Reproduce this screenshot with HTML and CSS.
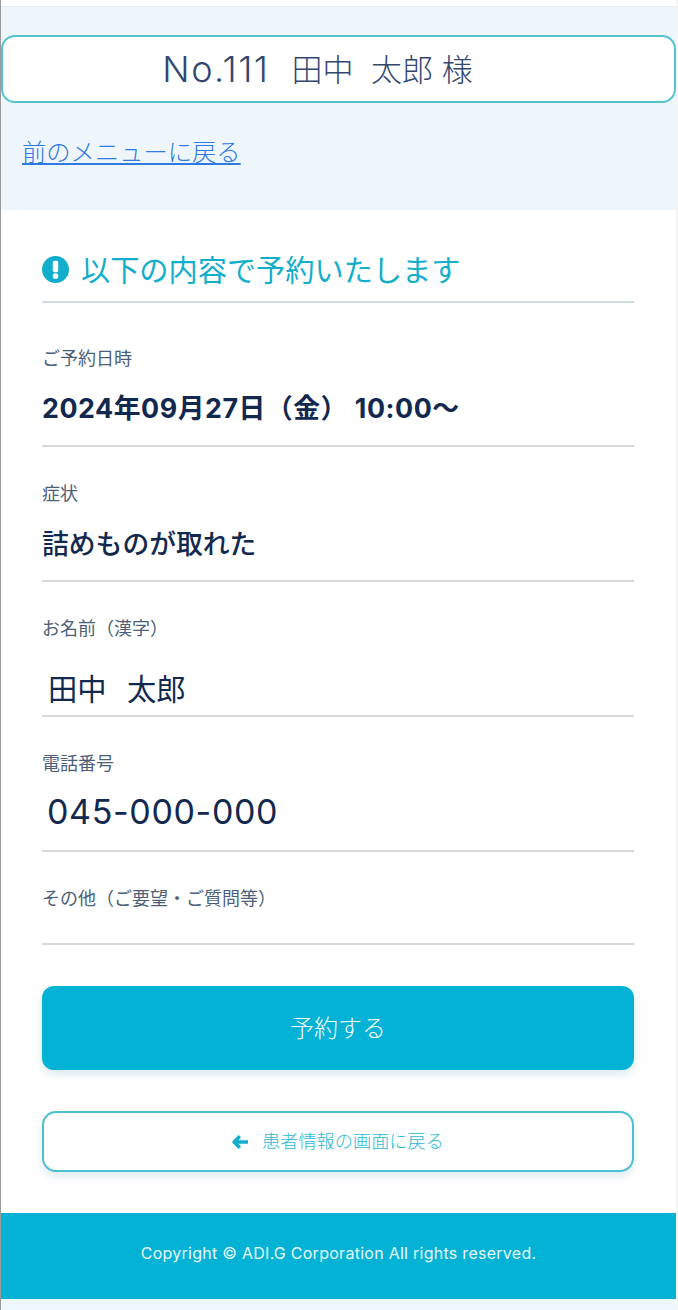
FILE: index.html
```html
<!DOCTYPE html>
<html lang="ja">
<head>
<meta charset="utf-8">
<title>予約確認</title>
<link rel="stylesheet" href="styles.css">
</head>
<body>
<div class="frame">
  <header class="top">
    <div class="patient"><span class="patient-no">No.111</span><span class="patient-name">田中&nbsp;&nbsp;太郎 様</span></div>
    <a class="menu-link" href="#">前のメニューに戻る</a>
  </header>
  <main class="main">
    <h1 class="title">
      <svg class="title-icon" viewBox="0 0 20 20" aria-hidden="true"><circle cx="10" cy="10" r="10" fill="#12aecb"/><rect x="8" y="3.6" width="4" height="8.4" rx="1.2" fill="#fff"/><circle cx="10" cy="14.8" r="2.1" fill="#fff"/></svg>
      <span>以下の内容で予約いたします</span>
    </h1>
    <section class="field field-date">
      <div class="label">ご予約日時</div>
      <div class="value value-date">2024年09月27日（金） 10:00～</div>
    </section>
    <section class="field field-symptom">
      <div class="label">症状</div>
      <div class="value">詰めものが取れた</div>
    </section>
    <section class="field field-name">
      <div class="label">お名前（漢字）</div>
      <div class="input-value">田中&nbsp;&nbsp;太郎</div>
    </section>
    <section class="field field-tel">
      <div class="label">電話番号</div>
      <div class="input-value tel">045-000-000</div>
    </section>
    <section class="field field-note">
      <div class="label">その他（ご要望・ご質問等）</div>
    </section>
    <a class="btn-primary" href="#">予約する</a>
    <a class="btn-back" href="#">
      <svg class="back-icon" viewBox="0 0 16 14" aria-hidden="true"><path d="M7.8 1.2 2.2 7l5.6 5.8M3 7H16" fill="none" stroke="#12aecb" stroke-width="3.6" stroke-linejoin="round"/></svg>
      <span class="back-text">患者情報の画面に戻る</span>
    </a>
  </main>
  <footer class="footer">Copyright © ADI.G Corporation All rights reserved.</footer>
  <div class="tail"></div>
</div>
</body>
</html>
```
FILE: styles.css
```css
* { box-sizing: border-box; }
html, body { margin: 0; padding: 0; background: #fff; }
body {
  font-family: "Inter", "Noto Sans CJK JP", "Noto Sans", sans-serif;
  color: #12284f;
}
.frame {
  width: 678px;
  height: 1310px;
  border-left: 1px solid #9a9a9a;
  border-right: 2px solid #f4f4f4;
  display: flex;
  flex-direction: column;
  padding-top: 6px;
  overflow: hidden;
}
.top {
  height: 204px;
  background: #eff6fb;
  padding-top: 28px;
  border-top: 1px solid #e8eef2;
}
.patient {
  height: 68px;
  background: #fff;
  border: 2px solid #55c3cf;
  border-radius: 14px;
  display: flex;
  align-items: center;
  justify-content: center;
  font-size: 31px;
  font-weight: 300;
  color: #33476f;
  padding-right: 42px;
}
.patient-no {
  font-size: 36px;
  letter-spacing: 1.5px;
  margin-right: 22px;
}
.patient-name { padding-bottom: 4px; }
.menu-link {
  display: block;
  margin: 32px 0 0 21px;
  font-size: 24.3px;
  line-height: 34px;
  font-weight: 300;
  color: #2f7ae0;
  text-decoration: underline;
  text-underline-offset: 2px;
}
.main {
  height: 1003px;
  background: #fff;
  padding: 0 42px 0 41px;
  display: flex;
  flex-direction: column;
}
.title {
  height: 93px;
  margin: 0;
  padding-top: 40px;
  display: flex;
  align-items: flex-start;
  gap: 12px;
  font-size: 29.2px;
  line-height: 42px;
  font-weight: 400;
  color: #12aecb;
  border-bottom: 2px solid #cddbdd;
}
.title-icon { width: 27px; height: 27px; margin-top: 6px; flex: none; }
.field { border-bottom: 2px solid #d4d8da; }
.label {
  font-size: 18px;
  line-height: 24px;
  font-weight: 400;
  color: #4d5f78;
}
.field-date { height: 144px; padding-top: 44px; }
.field-symptom, .field-name, .field-tel { height: 135px; padding-top: 35px; }
.field-note { height: 93px; padding-top: 35px; }
.value {
  margin-top: 18px;
  font-size: 26.8px;
  line-height: 40px;
  font-weight: 500;
  color: #12284f;
}
.value-date {
  margin-top: 17px;
  font-weight: 700;
  letter-spacing: 0.55px;
}
.input-value {
  margin: 28px 0 0 6px;
  font-size: 29.3px;
  line-height: 42px;
  font-weight: 400;
  word-spacing: 2px;
  color: #12284f;
}
.tel {
  margin: 13px 0 0 5px;
  font-size: 34px;
  line-height: 46px;
  font-weight: 400;
  letter-spacing: 0.65px;
}
.btn-primary {
  margin-top: 41px;
  height: 84px;
  border-radius: 12px;
  background: #03b2d4;
  box-shadow: 0 4px 8px rgba(3, 120, 150, 0.16);
  display: flex;
  align-items: center;
  justify-content: center;
  font-size: 24px;
  font-weight: 300;
  color: #f4fdff;
  text-decoration: none;
  padding-bottom: 4px;
}
.btn-back {
  margin-top: 41px;
  height: 61px;
  border: 2px solid #4cbfd3;
  border-radius: 14px;
  background: #fff;
  box-shadow: 0 5px 9px rgba(3, 100, 130, 0.12);
  display: flex;
  align-items: center;
  justify-content: center;
  gap: 14px;
  font-size: 18.2px;
  font-weight: 300;
  color: #2cb8d2;
  text-decoration: none;
}
.back-text { padding-bottom: 3px; }
.back-icon { width: 16px; height: 14px; flex: none; }
.footer {
  height: 86px;
  background: #03b2d4;
  color: #e6f9fd;
  display: flex;
  align-items: center;
  justify-content: center;
  font-size: 16px;
  font-weight: 400;
  letter-spacing: 0.27px;
  padding-bottom: 7px;
}
.tail { height: 11px; background: #eef7fb; }
```
